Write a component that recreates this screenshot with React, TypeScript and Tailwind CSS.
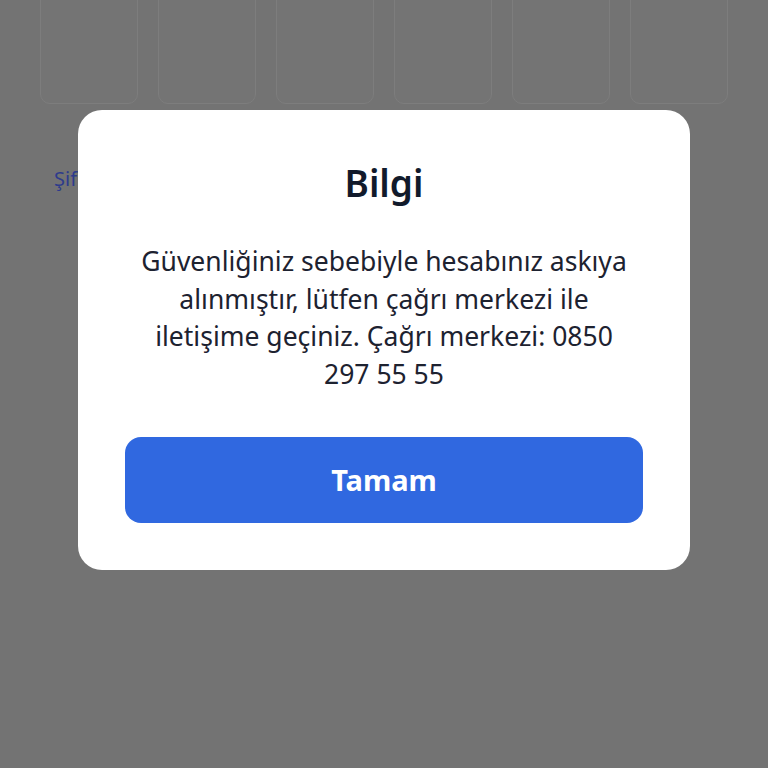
// App.tsx

import React from "react";

const cards = [1, 2, 3, 4, 5, 6];

const App: React.FC = () => {
  return (
    <div
      className="relative w-[768px] h-[768px] overflow-hidden bg-[#737373]"
      style={{ fontFamily: "'Noto Sans', 'Liberation Sans', sans-serif" }}
    >
      {/* page behind the dim overlay */}
      <div className="flex gap-[20px] pl-[40px] -mt-[28px]">
        {cards.map((c) => (
          <div
            key={c}
            className="w-[98px] h-[132px] rounded-[10px] border border-[#7d7d7d] bg-[#747474]"
          />
        ))}
      </div>
      <p className="pl-[54px] mt-[60px] text-[20px] text-[#2e3b8c]">Şifremi unuttum</p>

      {/* dialog */}
      <div className="absolute left-[78px] top-[110px] w-[612px] h-[460px] rounded-[24px] bg-white flex flex-col items-center px-[47px] pb-[47px]">
        <h2 className="mt-[49px] text-[37px] leading-[48px] font-semibold text-[#111a2b]">Bilgi</h2>
        <p className="mt-[36px] w-[505px] text-center text-[26.5px] leading-[37.5px] text-[#1d2230]">
          Güvenliğiniz sebebiyle hesabınız askıya alınmıştır, lütfen çağrı merkezi ile iletişime
          geçiniz. Çağrı merkezi: 0850 297 55 55
        </p>
        <button
          type="button"
          className="mt-auto w-full h-[86px] rounded-[16px] bg-[#3068e0] text-white text-[29px] font-bold"
        >
          Tamam
        </button>
      </div>
    </div>
  );
};

export default App;
